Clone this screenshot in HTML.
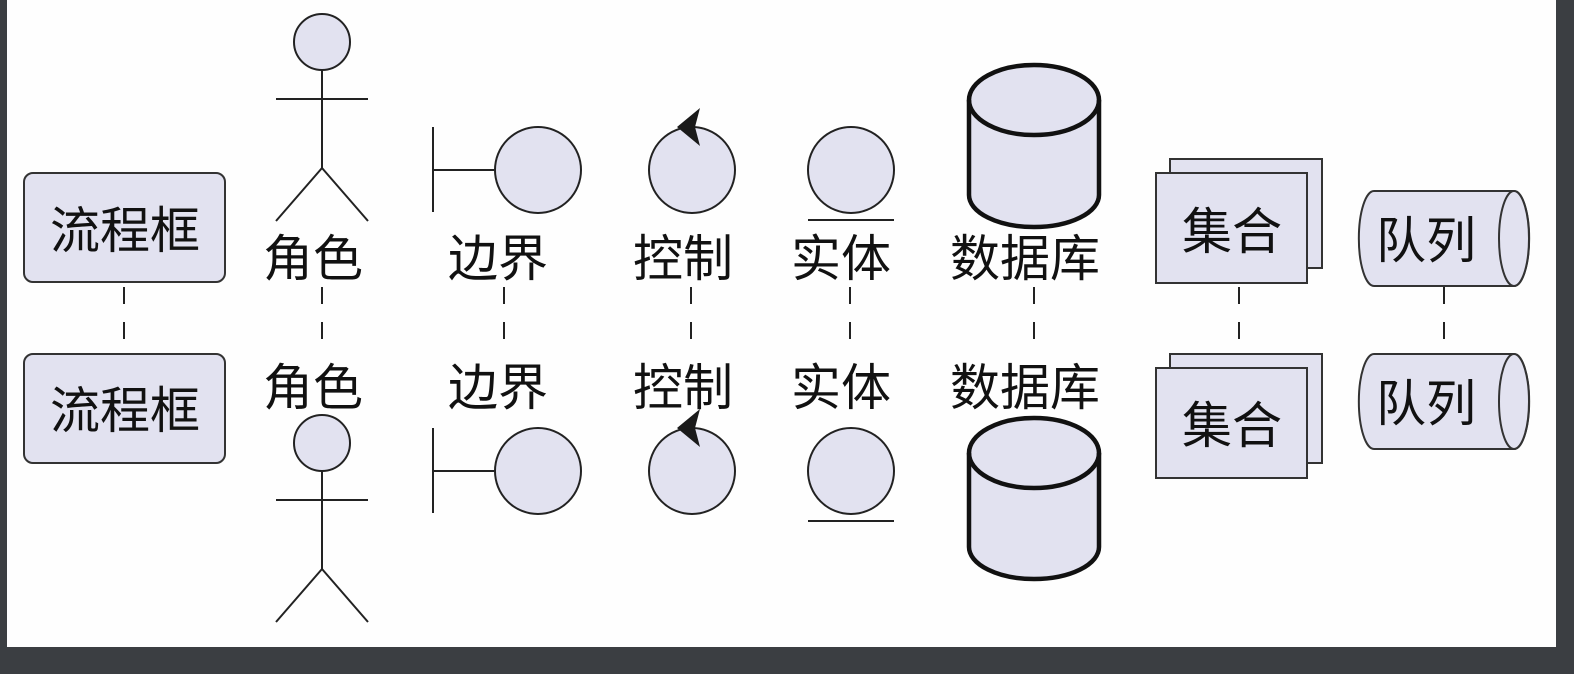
<!DOCTYPE html>
<html><head><meta charset="utf-8"><style>
html,body{margin:0;padding:0;background:#3b3e42;width:1574px;height:674px;overflow:hidden}
svg{position:absolute;left:0;top:0}
text{font-family:"Liberation Sans","Noto Sans CJK SC",sans-serif;font-size:50px;fill:#111}
</style></head><body>
<svg width="1574" height="674" viewBox="0 0 1574 674">
<rect x="7" y="0" width="1549" height="647" fill="#fefefe"/>
<g stroke="#222" stroke-width="2" stroke-dasharray="17 18" fill="none">
<line x1="124" y1="287" x2="124" y2="345"/>
<line x1="322" y1="287" x2="322" y2="345"/>
<line x1="504" y1="287" x2="504" y2="345"/>
<line x1="691" y1="287" x2="691" y2="345"/>
<line x1="850" y1="287" x2="850" y2="345"/>
<line x1="1034" y1="287" x2="1034" y2="345"/>
<line x1="1239" y1="287" x2="1239" y2="345"/>
<line x1="1444" y1="287" x2="1444" y2="345"/>
</g>
<g fill="#e2e2f0" stroke="#333" stroke-width="2">
<rect x="24" y="173" width="201" height="109" rx="9"/>
<rect x="24" y="354" width="201" height="109" rx="9"/>
</g>
<text x="125" y="248" text-anchor="middle">流程框</text>
<text x="125" y="428" text-anchor="middle">流程框</text>
<g stroke="#222" stroke-width="2" fill="#e2e2f0">
<circle cx="322" cy="42" r="28"/>
<line x1="322" y1="70" x2="322" y2="168"/><line x1="276" y1="99" x2="368" y2="99"/>
<polyline fill="none" points="276,221 322,168 368,221"/>
<circle cx="322" cy="443" r="28"/>
<line x1="322" y1="471" x2="322" y2="569"/><line x1="276" y1="500" x2="368" y2="500"/>
<polyline fill="none" points="276,622 322,569 368,622"/>
</g>
<text x="313" y="276" text-anchor="middle">角色</text>
<text x="313" y="405" text-anchor="middle">角色</text>
<g stroke="#222" stroke-width="2" fill="#e2e2f0">
<line x1="433" y1="127" x2="433" y2="212"/><line x1="433" y1="170" x2="494" y2="170"/>
<circle cx="538" cy="170" r="43"/>
<line x1="433" y1="428" x2="433" y2="513"/><line x1="433" y1="471" x2="494" y2="471"/>
<circle cx="538" cy="471" r="43"/>
</g>
<text x="498" y="276" text-anchor="middle">边界</text>
<text x="498" y="405" text-anchor="middle">边界</text>
<g stroke="#222" stroke-width="2" fill="#e2e2f0">
<circle cx="692" cy="170" r="43"/>
<circle cx="692" cy="471" r="43"/>
</g>
<g fill="#1a1a1a">
<path d="M700,108 L677,127 L700,146 L695,127 Z"/>
<path d="M700,409 L677,428 L700,447 L695,428 Z"/>
</g>
<text x="683" y="276" text-anchor="middle">控制</text>
<text x="683" y="405" text-anchor="middle">控制</text>
<g stroke="#222" stroke-width="2" fill="#e2e2f0">
<circle cx="851" cy="170" r="43"/><line x1="808" y1="220" x2="894" y2="220"/>
<circle cx="851" cy="471" r="43"/><line x1="808" y1="521" x2="894" y2="521"/>
</g>
<text x="841" y="276" text-anchor="middle">实体</text>
<text x="841" y="405" text-anchor="middle">实体</text>
<g stroke="#111" stroke-width="4.5" fill="#e2e2f0">
<path d="M969,100 A65,35 0 0 1 1099,100 L1099,195 A65,32 0 0 1 969,195 Z"/>
<path d="M969,100 A65,35 0 0 0 1099,100" fill="none"/>
<path d="M969,453 A65,35 0 0 1 1099,453 L1099,547 A65,32 0 0 1 969,547 Z"/>
<path d="M969,453 A65,35 0 0 0 1099,453" fill="none"/>
</g>
<text x="1025" y="276" text-anchor="middle">数据库</text>
<text x="1025" y="405" text-anchor="middle">数据库</text>
<g stroke="#333" stroke-width="2" fill="#e2e2f0">
<rect x="1170" y="159" width="152" height="109"/>
<rect x="1156" y="173" width="151" height="110"/>
<rect x="1170" y="354" width="152" height="109"/>
<rect x="1156" y="368" width="151" height="110"/>
</g>
<text x="1232" y="249" text-anchor="middle">集合</text>
<text x="1232" y="443" text-anchor="middle">集合</text>
<g stroke="#333" stroke-width="2" fill="#e2e2f0">
<path d="M1374,191 L1514,191 A15,47 0 0 1 1514,286 L1374,286 A15,47 0 0 1 1374,191 Z"/>
<ellipse cx="1514" cy="238.5" rx="15" ry="47.5"/>
<path d="M1374,354 L1514,354 A15,47 0 0 1 1514,449 L1374,449 A15,47 0 0 1 1374,354 Z"/>
<ellipse cx="1514" cy="401.5" rx="15" ry="47.5"/>
</g>
<text x="1426" y="258" text-anchor="middle">队列</text>
<text x="1426" y="421" text-anchor="middle">队列</text>
</svg>
</body></html>
